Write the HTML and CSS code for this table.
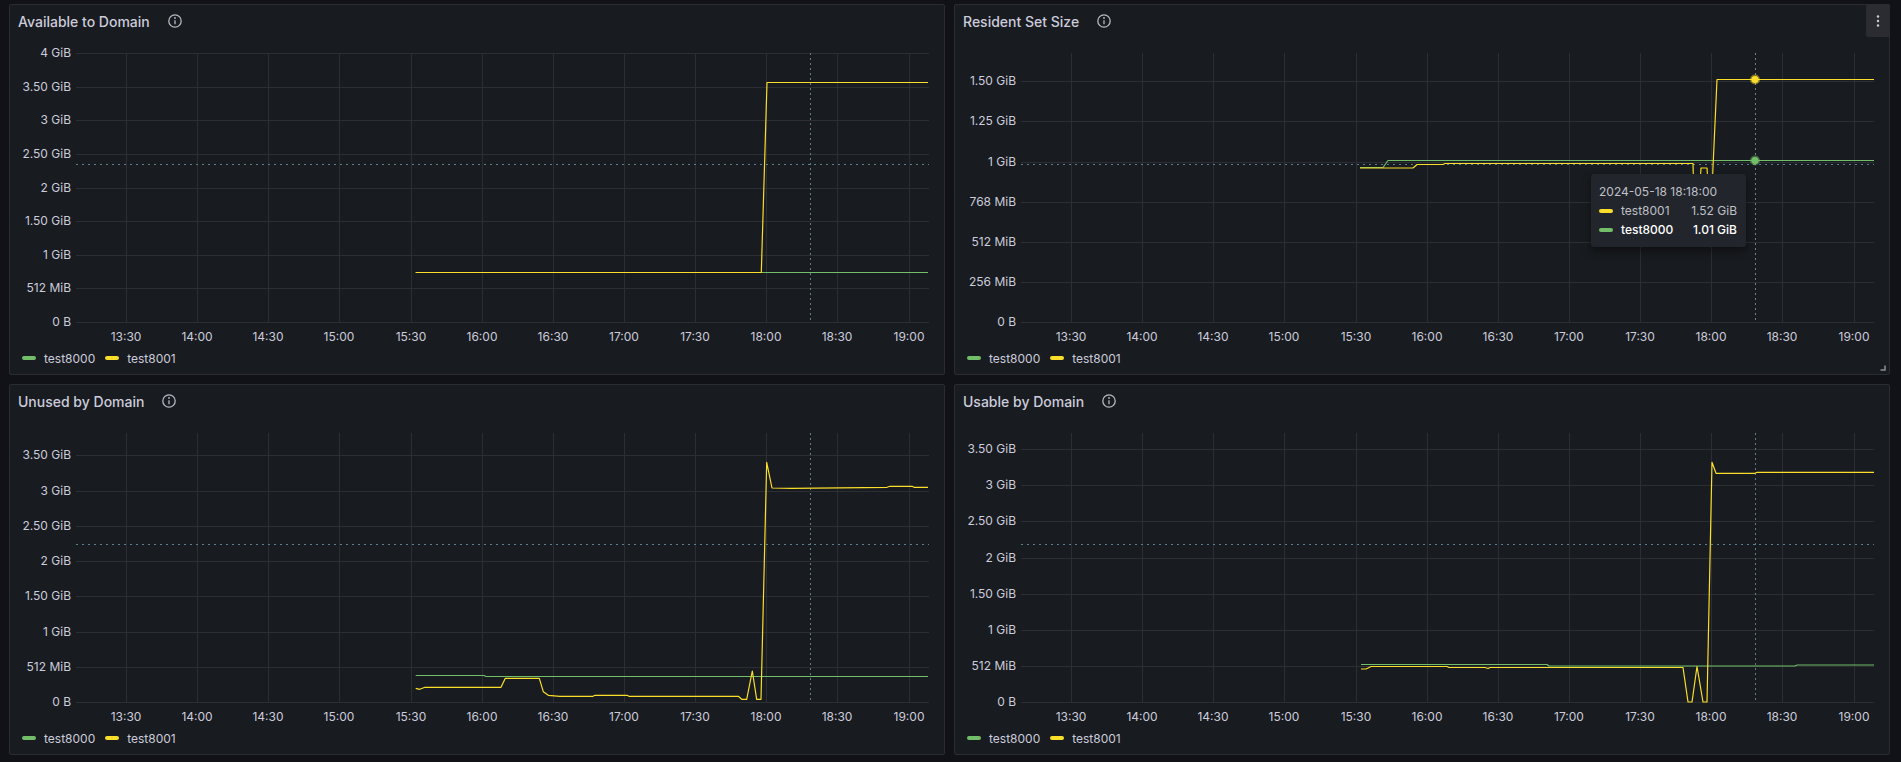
FILE: index.html
```html
<!DOCTYPE html>
<html lang="en">
<head>
<meta charset="utf-8">
<title>Memory dashboard</title>
<link rel="stylesheet" href="styles.css">
</head>
<body>
<div class="dashboard">

  <!-- Panel 1 -->
  <section class="panel">
    <header class="panel-header">
      <span class="panel-title">Available to Domain</span>
      <svg class="info-icon" viewBox="0 0 16 16"><circle cx="8" cy="8" r="6.2"/><line x1="8" y1="7.2" x2="8" y2="11.2"/><circle class="dot" cx="8" cy="5" r="0.9"/></svg>
    </header>
    <svg class="chart" viewBox="0 0 934 310">
      <path class="grid" d="M116.5 16V285M187.5 16V285M258.5 16V285M329.5 16V285M401.5 16V285M472.5 16V285M543.5 16V285M614.5 16V285M685.5 16V285M756.5 16V285M827.5 16V285M899.5 16V285"/>
      <path class="grid" d="M66 16.5H919M66 50.5H919M66 83.5H919M66 117.5H919M66 151.5H919M66 184.5H919M66 218.5H919M66 251.5H919M66 285.5H919"/>
      <g class="ylab">
        <text x="61" y="20">4 GiB</text><text x="61" y="54">3.50 GiB</text><text x="61" y="87">3 GiB</text><text x="61" y="121">2.50 GiB</text><text x="61" y="155">2 GiB</text><text x="61" y="188">1.50 GiB</text><text x="61" y="222">1 GiB</text><text x="61" y="255">512 MiB</text><text x="61" y="289">0 B</text>
      </g>
      <g class="xlab">
        <text x="116" y="304">13:30</text><text x="187" y="304">14:00</text><text x="258" y="304">14:30</text><text x="329" y="304">15:00</text><text x="401" y="304">15:30</text><text x="472" y="304">16:00</text><text x="543" y="304">16:30</text><text x="614" y="304">17:00</text><text x="685" y="304">17:30</text><text x="756" y="304">18:00</text><text x="827" y="304">18:30</text><text x="899" y="304">19:00</text>
      </g>
      <path class="thresh" d="M66 127.5H919"/>
      <path class="cursor" d="M800.5 16V285"/>
      <path class="s-green" d="M405.7 235.5L918 235.5"/>
      <path class="s-yellow" d="M405.7 235.5L751.3 235.5L757 45.5L918 45.5"/>
    </svg>
    <div class="legend">
      <span class="legend-item"><i class="swatch green"></i>test8000</span>
      <span class="legend-item"><i class="swatch yellow"></i>test8001</span>
    </div>
  </section>

  <!-- Panel 2 -->
  <section class="panel">
    <header class="panel-header">
      <span class="panel-title">Resident Set Size</span>
      <svg class="info-icon" viewBox="0 0 16 16"><circle cx="8" cy="8" r="6.2"/><line x1="8" y1="7.2" x2="8" y2="11.2"/><circle class="dot" cx="8" cy="5" r="0.9"/></svg>
    </header>
    <svg class="chart" viewBox="0 0 934 310">
      <path class="grid" d="M116.5 16V285M187.5 16V285M258.5 16V285M329.5 16V285M401.5 16V285M472.5 16V285M543.5 16V285M614.5 16V285M685.5 16V285M756.5 16V285M827.5 16V285M899.5 16V285"/>
      <path class="grid" d="M66 44.5H919M66 84.5H919M66 125.5H919M66 165.5H919M66 205.5H919M66 245.5H919M66 285.5H919"/>
      <g class="ylab">
        <text x="61" y="48">1.50 GiB</text><text x="61" y="88">1.25 GiB</text><text x="61" y="129">1 GiB</text><text x="61" y="169">768 MiB</text><text x="61" y="209">512 MiB</text><text x="61" y="249">256 MiB</text><text x="61" y="289">0 B</text>
      </g>
      <g class="xlab">
        <text x="116" y="304">13:30</text><text x="187" y="304">14:00</text><text x="258" y="304">14:30</text><text x="329" y="304">15:00</text><text x="401" y="304">15:30</text><text x="472" y="304">16:00</text><text x="543" y="304">16:30</text><text x="614" y="304">17:00</text><text x="685" y="304">17:30</text><text x="756" y="304">18:00</text><text x="827" y="304">18:30</text><text x="899" y="304">19:00</text>
      </g>
      <path class="thresh" d="M66 127.5H919"/>
      <path class="cursor grey" d="M800.5 16V285"/>
      <path class="s-green" d="M405 130.5L428 130.5L433 123.5L919 123.5"/>
      <path class="s-yellow" d="M405 131L458 131L462 127.5L488 127.5L490 126.5L738 126.5L739 163L744 163L746 131L752 131L754 163L756.5 163L762 42.5L919 42.5"/>
      <circle class="pt-yellow" cx="800" cy="42.5" r="3.6"/>
      <circle class="pt-green" cx="800" cy="123.5" r="3.6"/>
    </svg>
    <div class="legend">
      <span class="legend-item"><i class="swatch green"></i>test8000</span>
      <span class="legend-item"><i class="swatch yellow"></i>test8001</span>
    </div>
    <button class="menu-btn" type="button" aria-label="Menu">
      <svg viewBox="0 0 4 12" width="4" height="12"><circle cx="2" cy="1.5" r="1.2"/><circle cx="2" cy="6" r="1.2"/><circle cx="2" cy="10.5" r="1.2"/></svg>
    </button>
    <svg class="resize-handle" viewBox="0 0 6 6" width="6" height="6"><path d="M5 0.5V5H0.5"/></svg>
    <div class="tooltip">
      <div class="tt-time">2024-05-18 18:18:00</div>
      <div class="tt-row"><i class="swatch yellow"></i><span class="tt-name">test8001</span><span class="tt-val">1.52 GiB</span></div>
      <div class="tt-row active"><i class="swatch green"></i><span class="tt-name">test8000</span><span class="tt-val">1.01 GiB</span></div>
    </div>
  </section>

  <!-- Panel 3 -->
  <section class="panel">
    <header class="panel-header">
      <span class="panel-title">Unused by Domain</span>
      <svg class="info-icon" viewBox="0 0 16 16"><circle cx="8" cy="8" r="6.2"/><line x1="8" y1="7.2" x2="8" y2="11.2"/><circle class="dot" cx="8" cy="5" r="0.9"/></svg>
    </header>
    <svg class="chart" viewBox="0 0 934 310">
      <path class="grid" d="M116.5 16V285M187.5 16V285M258.5 16V285M329.5 16V285M401.5 16V285M472.5 16V285M543.5 16V285M614.5 16V285M685.5 16V285M756.5 16V285M827.5 16V285M899.5 16V285"/>
      <path class="grid" d="M66 38.5H919M66 74.5H919M66 109.5H919M66 144.5H919M66 179.5H919M66 215.5H919M66 250.5H919M66 285.5H919"/>
      <g class="ylab">
        <text x="61" y="42">3.50 GiB</text><text x="61" y="78">3 GiB</text><text x="61" y="113">2.50 GiB</text><text x="61" y="148">2 GiB</text><text x="61" y="183">1.50 GiB</text><text x="61" y="219">1 GiB</text><text x="61" y="254">512 MiB</text><text x="61" y="289">0 B</text>
      </g>
      <g class="xlab">
        <text x="116" y="304">13:30</text><text x="187" y="304">14:00</text><text x="258" y="304">14:30</text><text x="329" y="304">15:00</text><text x="401" y="304">15:30</text><text x="472" y="304">16:00</text><text x="543" y="304">16:30</text><text x="614" y="304">17:00</text><text x="685" y="304">17:30</text><text x="756" y="304">18:00</text><text x="827" y="304">18:30</text><text x="899" y="304">19:00</text>
      </g>
      <path class="thresh" d="M66 127.5H919"/>
      <path class="cursor" d="M800.5 16V285"/>
      <path class="s-green" d="M405.7 258.5L474 258.5L476 259.5L918 259.5"/>
      <path class="s-yellow" d="M405.7 271.3L409.7 272.3L415 270.3L491 270.3L495.3 261.3L529.3 261.3L533.3 274.7L538.3 278.3L550 279.3L583 279.3L585 278.3L617 278.3L619 279.3L728.3 279.3L731.7 282.3L736.7 282.3L742.3 254L746.7 282.3L751 282.3L756.7 45.3L762 71L782 71.3L877 70.3L880 69.3L902 69.3L904 70.3L918 70.3"/>
    </svg>
    <div class="legend">
      <span class="legend-item"><i class="swatch green"></i>test8000</span>
      <span class="legend-item"><i class="swatch yellow"></i>test8001</span>
    </div>
  </section>

  <!-- Panel 4 -->
  <section class="panel">
    <header class="panel-header">
      <span class="panel-title">Usable by Domain</span>
      <svg class="info-icon" viewBox="0 0 16 16"><circle cx="8" cy="8" r="6.2"/><line x1="8" y1="7.2" x2="8" y2="11.2"/><circle class="dot" cx="8" cy="5" r="0.9"/></svg>
    </header>
    <svg class="chart" viewBox="0 0 934 310">
      <path class="grid" d="M116.5 16V285M187.5 16V285M258.5 16V285M329.5 16V285M401.5 16V285M472.5 16V285M543.5 16V285M614.5 16V285M685.5 16V285M756.5 16V285M827.5 16V285M899.5 16V285"/>
      <path class="grid" d="M66 32.5H919M66 68.5H919M66 104.5H919M66 141.5H919M66 177.5H919M66 213.5H919M66 249.5H919M66 285.5H919"/>
      <g class="ylab">
        <text x="61" y="36">3.50 GiB</text><text x="61" y="72">3 GiB</text><text x="61" y="108">2.50 GiB</text><text x="61" y="145">2 GiB</text><text x="61" y="181">1.50 GiB</text><text x="61" y="217">1 GiB</text><text x="61" y="253">512 MiB</text><text x="61" y="289">0 B</text>
      </g>
      <g class="xlab">
        <text x="116" y="304">13:30</text><text x="187" y="304">14:00</text><text x="258" y="304">14:30</text><text x="329" y="304">15:00</text><text x="401" y="304">15:30</text><text x="472" y="304">16:00</text><text x="543" y="304">16:30</text><text x="614" y="304">17:00</text><text x="685" y="304">17:30</text><text x="756" y="304">18:00</text><text x="827" y="304">18:30</text><text x="899" y="304">19:00</text>
      </g>
      <path class="thresh" d="M66 127.5H919"/>
      <path class="cursor" d="M800.5 16V285"/>
      <path class="s-green" d="M406 247.5L592 247.5L594 249L840 249L842 248L919 248"/>
      <path class="s-yellow" d="M406 252L411 252L416 249.5L492 249.5L494 250.5L530 250.5L533 251.5L535 250.5L728 250.5L733 285L737 285L742 249.5L748 285L752 285L757 45.3L761 56.3L800 56.3L802 55.3L919 55.3"/>
    </svg>
    <div class="legend">
      <span class="legend-item"><i class="swatch green"></i>test8000</span>
      <span class="legend-item"><i class="swatch yellow"></i>test8001</span>
    </div>
  </section>

</div>
</body>
</html>
```

FILE: styles.css
```css
* { box-sizing: border-box; }

html, body {
  margin: 0;
  padding: 0;
}

body {
  width: 1901px;
  height: 762px;
  overflow: hidden;
  background: #111217;
  color: #ccccdc;
  font-family: Inter, "Noto Sans", "Liberation Sans", sans-serif;
}

.dashboard {
  display: grid;
  grid-template-columns: 936px 936px;
  grid-template-rows: 371px 371px;
  gap: 9px;
  padding: 4px 11px 7px 9px;
}

.panel {
  position: relative;
  display: flex;
  flex-direction: column;
  background: #181b1f;
  border: 1px solid #2a2c31;
  border-radius: 2px;
}

.panel-header {
  height: 32px;
  display: flex;
  align-items: center;
  padding: 0 8px;
}

.panel-title {
  font-size: 14px;
  font-weight: 500;
  color: #ccccdc;
  white-space: nowrap;
}

.info-icon {
  width: 16px;
  height: 16px;
  margin-left: 17px;
  fill: none;
  stroke: #b8b9c4;
  stroke-width: 1.3;
}

.info-icon .dot {
  fill: #b8b9c4;
  stroke: none;
}

.chart {
  display: block;
  width: 934px;
  height: 310px;
  overflow: visible;
}

.chart .grid {
  fill: none;
  stroke: #2c2e33;
  stroke-width: 1;
}

.chart .thresh {
  fill: none;
  stroke: #5b7f8d;
  stroke-width: 1;
  stroke-dasharray: 2 4;
}

.chart .cursor {
  fill: none;
  stroke: #5b7f8d;
  stroke-width: 1;
  stroke-dasharray: 2 3;
}

.chart .cursor.grey {
  stroke: #7d7e85;
}

.chart .s-green {
  fill: none;
  stroke: #73bf69;
  stroke-width: 1.2;
  stroke-linejoin: round;
}

.chart .s-yellow {
  fill: none;
  stroke: #fade2a;
  stroke-width: 1.2;
  stroke-linejoin: round;
}

.chart .pt-yellow {
  fill: #fade2a;
  stroke: rgba(250, 222, 42, 0.45);
  stroke-width: 3;
}

.chart .pt-green {
  fill: #73bf69;
  stroke: rgba(115, 191, 105, 0.45);
  stroke-width: 3;
}

.chart .ylab text,
.chart .xlab text {
  font-family: Inter, "Noto Sans", "Liberation Sans", sans-serif;
  font-size: 12px;
  fill: #ccccdc;
}

.chart .ylab text { text-anchor: end; }
.chart .xlab text { text-anchor: middle; }

.legend {
  height: 22px;
  display: flex;
  align-items: center;
  gap: 10px;
  padding-left: 12px;
  font-size: 12px;
  color: #ccccdc;
}

.legend-item {
  display: flex;
  align-items: center;
}

.swatch {
  display: inline-block;
  width: 14px;
  height: 4px;
  border-radius: 2px;
  margin-right: 8px;
}

.swatch.green { background: #73bf69; }
.swatch.yellow { background: #fade2a; }

.menu-btn {
  position: absolute;
  top: -1px;
  right: -1px;
  width: 24px;
  height: 33px;
  padding: 0;
  border: none;
  border-radius: 2px;
  background: #2a2c31;
  display: flex;
  align-items: center;
  justify-content: center;
}

.menu-btn svg { fill: #ccccdc; }

.resize-handle {
  position: absolute;
  right: 3px;
  bottom: 3px;
  fill: none;
  stroke: #8e8f96;
  stroke-width: 1.5;
}

.tooltip {
  position: absolute;
  left: 636px;
  top: 169px;
  width: 155px;
  padding: 8px 9px 8px 8px;
  background: #22252b;
  border-radius: 3px;
  box-shadow: 0 4px 8px rgba(0, 0, 0, 0.45);
  font-size: 12px;
  line-height: 19px;
  color: #bfc0c8;
  white-space: nowrap;
}

.tt-row {
  display: flex;
  align-items: center;
}

.tt-name { flex: 1; }

.tt-row.active {
  color: #ffffff;
  font-weight: 500;
}
```
